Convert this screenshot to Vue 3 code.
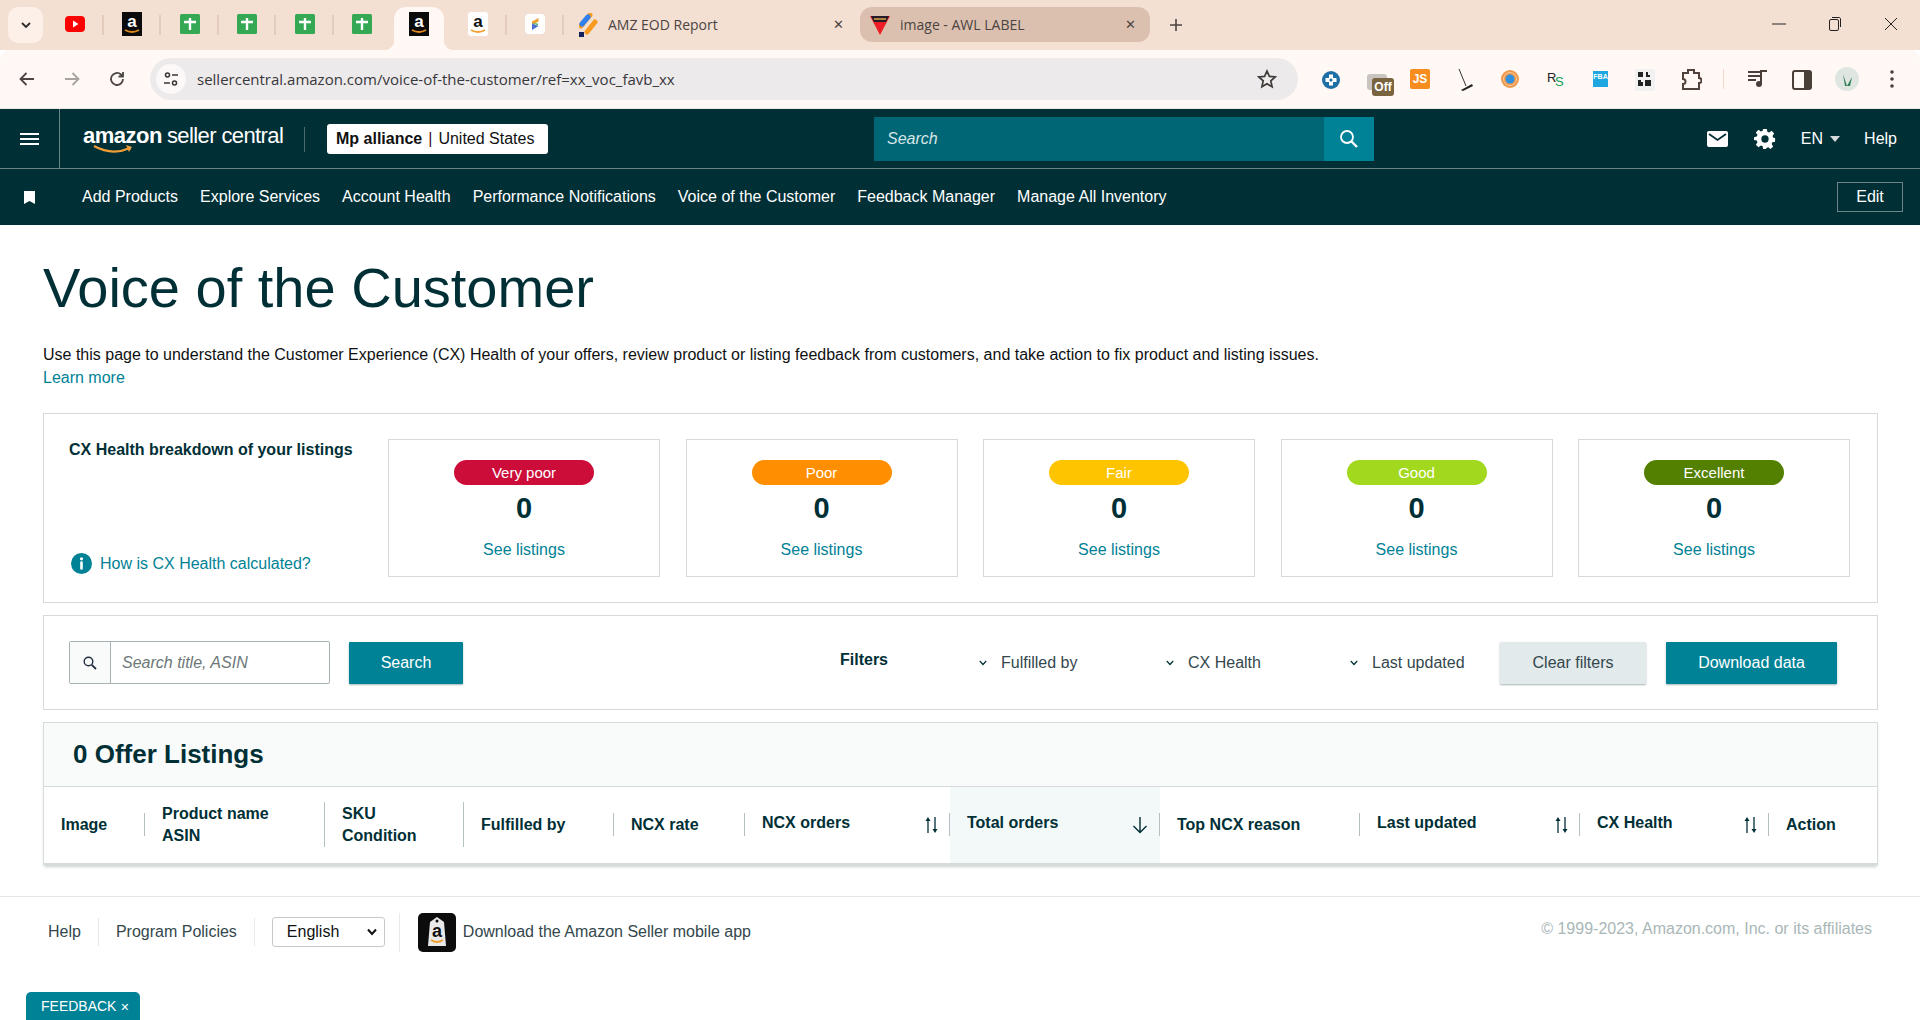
<script setup>
const pinned = [
  { icon: "yt" }, { icon: "amz" }, { icon: "sheet" }, { icon: "sheet" }, { icon: "sheet" }, { icon: "sheet" },
  { icon: "amz", active: true }, { icon: "amzw", wide: true }, { icon: "slogo" },
];
const navLinks = ["Add Products", "Explore Services", "Account Health", "Performance Notifications", "Voice of the Customer", "Feedback Manager", "Manage All Inventory"];
const health = [
  { label: "Very poor", color: "#cc0c39" },
  { label: "Poor", color: "#ff8f00" },
  { label: "Fair", color: "#ffc400" },
  { label: "Good", color: "#a2d81e" },
  { label: "Excellent", color: "#538000" },
];
const filters = [
  { label: "Fulfilled by", w: 187 },
  { label: "CX Health", w: 184 },
  { label: "Last updated", w: 144 },
];
const columns = [
  { w: 101, lines: ["Image"] },
  { w: 180, lines: ["Product name", "ASIN"], tall: true },
  { w: 139, lines: ["SKU", "Condition"], tall: true },
  { w: 150, lines: ["Fulfilled by"] },
  { w: 131, lines: ["NCX rate"] },
  { w: 205, lines: ["NCX orders"], sort: true },
  { w: 210, lines: ["Total orders"], sort: true, sorted: true },
  { w: 200, lines: ["Top NCX reason"] },
  { w: 220, lines: ["Last updated"], sort: true },
  { w: 189, lines: ["CX Health"], sort: true },
  { w: 109, lines: ["Action"], last: true },
];
</script>

<template>
  <div class="page">
    <svg class="defs" width="0" height="0">
      <symbol id="amz" viewBox="0 0 20 24">
        <rect width="20" height="24" fill="#0b0b0b" />
        <text x="10" y="15" font-size="17" font-weight="700" text-anchor="middle" fill="#fff" font-family="Liberation Sans">a</text>
        <path d="M3 18 q7 4 14 0" stroke="#e08a1e" stroke-width="2" fill="none" />
      </symbol>
      <symbol id="amzw" viewBox="0 0 20 24">
        <rect width="20" height="24" rx="3" fill="#fff" />
        <text x="10" y="15" font-size="17" font-weight="700" text-anchor="middle" fill="#111" font-family="Liberation Sans">a</text>
        <path d="M3 18 q7 4 14 0" stroke="#f0a030" stroke-width="2" fill="none" />
      </symbol>
      <symbol id="sheet" viewBox="0 0 20 20">
        <rect width="20" height="20" rx="1.5" fill="#34a853" />
        <path d="M4 8h12M10 4v12" stroke="#fff" stroke-width="2.4" fill="none" />
      </symbol>
      <symbol id="yt" viewBox="0 0 20 20">
        <rect y="2" width="20" height="16" rx="4" fill="#f00" />
        <path d="M8 6.5l5.5 3.5L8 13.5z" fill="#fff" />
      </symbol>
      <symbol id="slogo" viewBox="0 0 20 20">
        <rect width="20" height="20" rx="4" fill="#fff" />
        <path d="M13.5 4L7 7.5v3.5l6.5-3.5z" fill="#f0a030" />
        <path d="M7 9.5l6.5 2.5-6.5 4z" fill="#4a6fd0" />
        <path d="M7 9l6 2.6v-2z" fill="#58b368" />
      </symbol>
    </svg>

    <div class="tabstrip">
      <div class="tab-list">
        <svg width="10" height="7" viewBox="0 0 10 7"><path d="M1 1l4 4 4-4" stroke="#2b2b2b" stroke-width="1.8" fill="none" /></svg>
      </div>
      <div class="pins">
        <div v-for="(p, i) in pinned" :key="i" class="pin" :class="{ active: p.active, wide: p.wide }">
          <svg width="20" height="24" class="pin-icon"><use :href="'#' + p.icon" /></svg>
        </div>
      </div>
      <div class="tab">
        <svg width="20" height="24" viewBox="0 0 20 24">
          <path d="M2 13L11 2M8 19L16 9" stroke="#f79a1f" stroke-width="5" stroke-linecap="round" />
          <path d="M3 11l6-7" stroke="#2f80ed" stroke-width="5" stroke-linecap="round" />
          <rect x="0" y="19" width="5" height="5" fill="#14205a" />
        </svg>
        <span class="tab-title">AMZ EOD Report</span>
        <span class="tab-x">✕</span>
      </div>
      <div class="tab current">
        <svg width="20" height="20" viewBox="0 0 20 20">
          <path d="M0 1h20L10 20z" fill="#ed1c24" />
          <path d="M1 1h18l-3 6H4z" fill="#241a2a" />
          <path d="M4 4h12" stroke="#e6b84c" stroke-width="1.4" />
        </svg>
        <span class="tab-title">image - AWL LABEL</span>
        <span class="tab-x">✕</span>
      </div>
      <svg class="plus" width="14" height="14" viewBox="0 0 14 14"><path d="M7 1v12M1 7h12" stroke="#4b4442" stroke-width="1.6" /></svg>
      <div class="win">
        <svg width="14" height="14" viewBox="0 0 14 14"><path d="M0 7h14" stroke="#222" stroke-width="1" /></svg>
        <svg width="14" height="14" viewBox="0 0 14 14" fill="none" stroke="#222"><rect x="1.5" y="2.5" width="9" height="11" rx="1.5" /><path d="M4 .5h7.5a2 2 0 0 1 1 1.5v8" /></svg>
        <svg width="14" height="14" viewBox="0 0 14 14"><path d="M1 1l12 12M13 1L1 13" stroke="#222" stroke-width="1" /></svg>
      </div>
    </div>

    <div class="toolbar">
      <svg class="tool" width="18" height="18" viewBox="0 0 18 18"><path d="M16 9H3M8.5 3L2.5 9l6 6" stroke="#4b4442" stroke-width="1.8" fill="none" /></svg>
      <svg class="tool" width="18" height="18" viewBox="0 0 18 18"><path d="M2 9h13M9.5 3l6 6-6 6" stroke="#a9a3a0" stroke-width="1.8" fill="none" /></svg>
      <svg class="tool" width="18" height="18" viewBox="0 0 18 18"><path d="M15 9a6 6 0 1 1-2-4.5L15 6.5M15 2v4.5h-4.5" stroke="#4b4442" stroke-width="1.8" fill="none" /></svg>
      <div class="omnibox">
        <span class="site-btn">
          <svg width="16" height="16" viewBox="0 0 16 16" fill="none" stroke="#3a3533" stroke-width="1.5">
            <circle cx="4.5" cy="4" r="2" /><path d="M9 4h6M1 12h6" /><circle cx="11.5" cy="12" r="2" />
          </svg>
        </span>
        <span class="url">sellercentral.amazon.com/voice-of-the-customer/ref=xx_voc_favb_xx</span>
        <svg class="star" width="20" height="20" viewBox="0 0 20 20"><path d="M10 2l2.4 5.4 5.8.6-4.4 3.9 1.3 5.8L10 14.7l-5.1 3 1.3-5.8L1.8 8l5.8-.6z" fill="none" stroke="#3f3a38" stroke-width="1.7" /></svg>
      </div>
      <div class="exts">
        <svg class="e" style="left:0" width="18" height="20" viewBox="0 0 18 20"><circle cx="9" cy="10" r="9" fill="#1d6fa5" /><path d="M9 4.5v11M3.500 10h11" stroke="#fff" stroke-width="4" /><circle cx="9" cy="10" r="1.600" fill="#1d6fa5" /></svg>
        <div class="off-wrap"><span class="off-back"></span><span class="off">Off</span></div>
        <span class="js">JS</span>
        <svg width="22" height="24" class="e2" viewBox="0 0 22 24"><path d="M5 1l7 17" stroke="#333" stroke-width="1" /><path d="M7 22l11-6 1 2-10 5z" fill="#222" /></svg>
        <svg width="20" height="20" class="e3" viewBox="0 0 20 20"><circle cx="10" cy="10" r="9" fill="#ee9a4d" /><circle cx="10" cy="10" r="4.500" fill="#2f8fe0" /><circle cx="10" cy="10" r="6.500" fill="none" stroke="#f6c79c" /></svg>
        <span class="rs"><b>R</b><i>S</i></span>
        <span class="fba">FBA</span>
        <svg width="20" height="22" class="e4" viewBox="0 0 20 22"><rect width="20" height="22" rx="2" fill="#f1f1f1" /><path d="M3 3h5v5H3zM11 3h2v3h2v2h-4zM3 11h3v2h2v4H3zM10 11h6v6h-6z" fill="#222" /></svg>
        <svg width="22" height="24" class="e5" viewBox="0 0 22 24"><path d="M3 5h5V2h6v3h5v5a2.500 2.500 0 0 1 0 5v6H3v-5a2.500 2.500 0 0 0 0-5z" fill="none" stroke="#51433c" stroke-width="2" /></svg>
        <span class="ext-sep"></span>
        <svg width="22" height="20" class="e6" viewBox="0 0 22 20"><path d="M1 3h12M1 7h12M1 11h8" stroke="#4b3f39" stroke-width="2" /><path d="M14 15V2h6" stroke="#4b3f39" stroke-width="2" fill="none" /><circle cx="12" cy="15" r="3" fill="#4b3f39" /></svg>
        <svg width="20" height="20" class="e7" viewBox="0 0 20 20"><rect x="1" y="1" width="18" height="18" rx="2" fill="none" stroke="#4b3f39" stroke-width="2" /><rect x="12" y="1" width="7" height="18" fill="#4b3f39" /></svg>
        <svg width="24" height="24" class="e8" viewBox="0 0 24 24"><circle cx="12" cy="12" r="12" fill="#dfe6e2" /><path d="M8 7l4 12 5-9-2 9h-5z" fill="#2f7d55" /></svg>
        <svg width="6" height="20" class="e9" viewBox="0 0 6 20"><circle cx="3" cy="3" r="1.800" fill="#4b3f39" /><circle cx="3" cy="10" r="1.800" fill="#4b3f39" /><circle cx="3" cy="17" r="1.800" fill="#4b3f39" /></svg>
      </div>
    </div>

    <header class="sc-head">
      <div class="sc-top">
        <div class="sc-left">
          <div class="burger"><i></i><i></i><i></i></div>
          <div class="logo">
            <span class="logo-a">amazon</span><span class="logo-s">seller central</span>
            <svg class="smile" width="42" height="10" viewBox="0 0 42 10"><path d="M1 1q18 10 36 2" stroke="#f19e38" stroke-width="2.200" fill="none" /><path d="M33 0l6 2-3 5" fill="#f19e38" /></svg>
          </div>
          <span class="logo-sep"></span>
          <div class="acct"><b>Mp alliance</b><span class="pipe">|</span>United States</div>
        </div>
        <div class="sc-search">
          <span class="sc-ph">Search</span>
          <span class="sc-go">
            <svg width="20" height="20" viewBox="0 0 20 20" fill="none" stroke="#fff" stroke-width="1.800"><circle cx="8" cy="8" r="6" /><path d="M12.500 12.500L18 18" stroke-width="2.400" /></svg>
          </span>
        </div>
        <div class="sc-right">
          <svg width="21" height="16" viewBox="0 0 21 16"><rect width="21" height="16" rx="2" fill="#fff" /><path d="M2 3l8.500 6L19 3" stroke="#002f36" stroke-width="1.800" fill="none" /></svg>
          <svg class="gear" width="22" height="22" viewBox="0 0 24 24"><path fill="#fff" fill-rule="evenodd" d="M10 1h4l.6 3.100 1.900.8 2.700-1.800 2.800 2.800-1.800 2.700.8 1.900L23 11v4l-3 .6-.8 1.900 1.700 2.600-2.800 2.800-2.700-1.800-1.800.8L13 23h-3l-.6-3-1.900-.8-2.600 1.800L2 18.200l1.800-2.700-.8-1.900L0 13v-3l3-.6.800-1.900L2 4.900 4.900 2l2.600 1.800 1.900-.8zM12 8a4 4 0 1 0 0 8 4 4 0 0 0 0-8z" /></svg>
          <span class="lang">EN<i class="caret"></i></span>
          <span class="help">Help</span>
        </div>
      </div>
      <nav class="sc-nav">
        <svg class="bm" width="11" height="13" viewBox="0 0 11 13"><path d="M0 0h11v13L5.500 10 0 13z" fill="#fff" /></svg>
        <a v-for="l in navLinks" :key="l">{{ l }}</a>
        <button class="edit">Edit</button>
      </nav>
    </header>

    <main class="main">
      <h1>Voice of the Customer</h1>
      <p class="intro">Use this page to understand the Customer Experience (CX) Health of your offers, review product or listing feedback from customers, and take action to fix product and listing issues.</p>
      <a class="learn">Learn more</a>

      <section class="panel cx">
        <div class="cx-side">
          <div class="cx-title">CX Health breakdown of your listings</div>
          <div class="cx-how">
            <svg width="21" height="21" viewBox="0 0 21 21"><circle cx="10.500" cy="10.500" r="10.500" fill="#008296" /><rect x="9.200" y="8.500" width="2.600" height="8" fill="#fff" /><circle cx="10.500" cy="5.800" r="1.600" fill="#fff" /></svg>
            <a>How is CX Health calculated?</a>
          </div>
        </div>
        <div class="cx-cards">
          <div v-for="h in health" :key="h.label" class="card">
            <span class="pill" :style="{ background: h.color }">{{ h.label }}</span>
            <span class="num">0</span>
            <a class="see">See listings</a>
          </div>
        </div>
      </section>

      <section class="panel filters">
        <div class="search-box">
          <span class="prefix">
            <svg width="14" height="14" viewBox="0 0 14 14" fill="none" stroke="#232f3e" stroke-width="1.400"><circle cx="5.500" cy="5.500" r="4.300" /><path d="M8.800 8.800L13 13" stroke-width="1.800" /></svg>
          </span>
          <span class="ph">Search title, ASIN</span>
        </div>
        <button class="btn primary search-btn">Search</button>
        <b class="f-label">Filters</b>
        <div v-for="f in filters" :key="f.label" class="f-item" :style="{ width: f.w + 'px' }">
          <svg width="8" height="6" viewBox="0 0 8 6"><path d="M.8 1l3.200 3.500L7.200 1" stroke="#002f36" stroke-width="1.200" fill="none" /></svg>
          <span>{{ f.label }}</span>
        </div>
        <button class="btn clear">Clear filters</button>
        <button class="btn primary dl">Download data</button>
      </section>

      <section class="panel listings">
        <div class="l-title">0 Offer Listings</div>
        <div class="l-row">
          <div v-for="c in columns" :key="c.lines[0]" class="col" :class="{ sorted: c.sorted, last: c.last, tall: c.tall }" :style="{ width: c.w + 'px' }">
            <div class="col-inner" :class="{ up: c.sort }">
              <span class="col-text"><span v-for="t in c.lines" :key="t">{{ t }}</span></span>
              <svg v-if="c.sorted" class="sort-ic big" width="16" height="18" viewBox="0 0 16 18"><path d="M8 1v15M1.500 10L8 16.500 14.500 10" stroke="#002f36" stroke-width="1.400" fill="none" /></svg>
              <svg v-else-if="c.sort" class="sort-ic" width="14" height="18" viewBox="0 0 14 18"><path d="M4 17V3M11 1v14" stroke="#002f36" stroke-width="1.300" /><path d="M1.500 5L4 1l2.500 4zM8.500 13L11 17l2.500-4z" fill="#002f36" /></svg>
            </div>
          </div>
        </div>
      </section>
    </main>

    <footer class="foot">
      <a class="f-link first">Help</a>
      <a class="f-link">Program Policies</a>
      <div class="lang-sel">
        <span>English</span>
        <svg width="10" height="8" viewBox="0 0 10 8"><path d="M1 1.500l4 4.500 4-4.500" stroke="#111" stroke-width="2" fill="none" /></svg>
      </div>
      <div class="app-ic">
        <svg width="38" height="39" viewBox="0 0 38 39">
          <rect width="38" height="39" rx="5" fill="#0c0c0c" />
          <path d="M12 9l7-5 7 5 2 24H10z" fill="#e9e9e9" />
          <circle cx="19" cy="8" r="1.500" fill="#0c0c0c" />
          <text x="19" y="24" font-size="18" font-weight="700" text-anchor="middle" fill="#111" font-family="Liberation Sans">a</text>
          <path d="M13 27q6 4 12 0" stroke="#f0a030" stroke-width="1.800" fill="none" />
        </svg>
        <span>Download the Amazon Seller mobile app</span>
      </div>
      <span class="copy">© 1999-2023, Amazon.com, Inc. or its affiliates</span>
    </footer>

    <div class="feedback">FEEDBACK <span>✕</span></div>
  </div>
</template>

<style scoped>
.page {
  position: relative;
  width: 1920px;
  height: 1020px;
  overflow: hidden;
  background: #fff;
  font-family: "Liberation Sans", Arial, sans-serif;
  color: #002f36;
  font-size: 16px;
}
.defs {
  position: absolute;
}

/* browser */
.tabstrip {
  height: 50px;
  background: #f4dfd3;
  display: flex;
  align-items: flex-start;
  padding-left: 8px;
}
.tab-list {
  width: 35px;
  height: 36px;
  margin-top: 7px;
  background: #fdf0e9;
  border-radius: 10px;
  display: flex;
  align-items: center;
  justify-content: center;
}
.pins {
  display: flex;
  margin-left: 3px;
}
.pin {
  width: 57.500px;
  height: 43px;
  margin-top: 7px;
  display: flex;
  align-items: center;
  justify-content: center;
  position: relative;
  padding-bottom: 10px;
  box-sizing: border-box;
}
.pin::after {
  content: "";
  position: absolute;
  right: 0;
  top: 8px;
  height: 20px;
  width: 2px;
  background: #e5cbbb;
}
.pin:nth-child(6)::after,
.pin.active::after {
  display: none;
}
.pin.active {
  width: 50px;
  margin-left: 3px;
  margin-right: 5px;
  background: #fff8f4;
  border-radius: 12px 12px 0 0;
}
.pin.active::before {
  content: "";
  position: absolute;
  left: -10px;
  right: -10px;
  bottom: 0;
  height: 10px;
  background:
    radial-gradient(circle at 0 0, #f4dfd3 10px, #fff8f4 10.500px) 0 0 / 10px 10px no-repeat,
    radial-gradient(circle at 100% 0, #f4dfd3 10px, #fff8f4 10.500px) 100% 0 / 10px 10px no-repeat;
}
.pin-icon {
  position: relative;
}
.tab {
  width: 295px;
  height: 35px;
  margin-top: 7px;
  display: flex;
  align-items: center;
  padding-left: 14px;
  box-sizing: border-box;
  font-family: "Open Sans", sans-serif;
  font-size: 14px;
  color: #4b4442;
  flex-shrink: 0;
  margin-left: 1px;
}
.tab-title {
  margin-left: 9px;
  flex: 1;
}
.tab-x {
  font-size: 13px;
  margin-right: 16px;
  font-family: "DejaVu Sans", sans-serif;
}
.tab.current {
  background: #dcc0af;
  border-radius: 12px;
  width: 290px;
  padding-left: 10px;
  margin-left: 0;
}
.tab.current .tab-title {
  margin-left: 10px;
}
.tab.current .tab-x {
  margin-right: 14px;
}
.plus {
  margin: 18px 0 0 19px;
}
.win {
  margin-left: auto;
  display: flex;
  gap: 42px;
  padding: 17px 22px 0 0;
}
.toolbar {
  height: 58px;
  background: #fff8f4;
  border-radius: 10px 10px 0 0;
  border-bottom: 1px solid #f2e9e3;
  box-sizing: content-box;
  display: flex;
  align-items: center;
  padding-left: 18px;
  position: relative;
}
.tool {
  margin-right: 27px;
  flex-shrink: 0;
}
.omnibox {
  position: absolute;
  left: 150px;
  top: 8px;
  width: 1148px;
  height: 42px;
  border-radius: 21px;
  background: #edeaec;
  display: flex;
  align-items: center;
  padding-left: 6px;
  box-sizing: border-box;
}
.site-btn {
  width: 30px;
  height: 30px;
  border-radius: 50%;
  background: #fbf8f7;
  display: flex;
  align-items: center;
  justify-content: center;
}
.url {
  margin-left: 11px;
  font-family: "Open Sans", sans-serif;
  font-size: 15px;
  color: #38383b;
}
.star {
  position: absolute;
  right: 21px;
  top: 11px;
}
.exts {
  position: absolute;
  left: 1322px;
  top: 0;
  right: 0;
  height: 58px;
}
.exts > * {
  position: absolute;
}
.e {
  top: 20px;
}
.off-wrap {
  left: 45px;
  top: 24px;
  width: 28px;
  height: 26px;
}
.off-back {
  position: absolute;
  left: 0;
  top: 0;
  width: 20px;
  height: 16px;
  border-radius: 3px;
  background: #c9c4bf;
}
.off {
  position: absolute;
  left: 5px;
  top: 4px;
  width: 22px;
  height: 18px;
  border-radius: 3px;
  background: #7a6440;
  color: #fff;
  font-size: 12px;
  font-weight: 700;
  text-align: center;
  line-height: 18px;
}
.js {
  left: 88px;
  top: 19px;
  width: 20px;
  height: 20px;
  background: #f78d1e;
  border-radius: 2px;
  color: #fff;
  font-weight: 700;
  font-size: 12px;
  text-align: center;
  line-height: 20px;
}
.e2 {
  left: 132px;
  top: 18px;
}
.e3 {
  left: 178px;
  top: 19px;
}
.rs {
  left: 225px;
  top: 19px;
  font-size: 13px;
  line-height: 18px;
  color: #222;
  width: 20px;
}
.rs b {
  font-weight: 400;
}
.rs i {
  font-style: normal;
  color: #0f9d58;
  position: absolute;
  left: 8px;
  top: 4px;
}
.fba {
  left: 271px;
  top: 21px;
  width: 15px;
  height: 16px;
  background: #1ea7e1;
  color: #fff;
  font-size: 7px;
  font-weight: 700;
  text-align: center;
  line-height: 12px;
}
.e4 {
  left: 313px;
  top: 19px;
}
.e5 {
  left: 358px;
  top: 18px;
}
.ext-sep {
  left: 401px;
  top: 19px;
  width: 1px;
  height: 20px;
  background: #f4d7c8;
}
.e6 {
  left: 425px;
  top: 19px;
}
.e7 {
  left: 470px;
  top: 20px;
}
.e8 {
  left: 513px;
  top: 17px;
}
.e9 {
  left: 567px;
  top: 19px;
}

/* seller central header */
.sc-head {
  background: #002f36;
  color: #fff;
}
.sc-top {
  height: 60px;
  display: grid;
  grid-template-columns: 874px 500px 1fr;
  align-items: center;
  border-bottom: 1px solid #6e8488;
  box-sizing: border-box;
}
.sc-left {
  display: flex;
  align-items: center;
  height: 60px;
}
.burger {
  width: 60px;
  height: 60px;
  box-sizing: border-box;
  border-right: 1px solid #6e8488;
  display: flex;
  flex-direction: column;
  justify-content: center;
  gap: 3px;
  padding: 0 20px;
}
.burger i {
  height: 2px;
  background: #fff;
}
.logo {
  position: relative;
  margin-left: 23px;
  width: 198px;
  white-space: nowrap;
  display: flex;
  align-items: baseline;
  padding-bottom: 6px;
}
.logo-a {
  font-weight: 700;
  font-size: 22px;
  letter-spacing: -0.5px;
}
.logo-s {
  font-size: 22px;
  font-weight: 400;
  margin-left: 5px;
  letter-spacing: -0.6px;
}
.smile {
  position: absolute;
  left: 10px;
  top: 22px;
}
.logo-sep {
  width: 1px;
  height: 25px;
  background: #4d6a6f;
  margin-left: 23px;
}
.acct {
  margin-left: 22px;
  height: 30px;
  width: 221px;
  box-sizing: border-box;
  background: #fff;
  border-radius: 3px;
  color: #111;
  padding-left: 9px;
  font-size: 16px;
  line-height: 29px;
  white-space: nowrap;
}
.pipe {
  color: #3a0a20;
  margin: 0 6px;
}
.sc-search {
  height: 44px;
  background: #006574;
  display: flex;
  justify-content: space-between;
  align-items: center;
}
.sc-ph {
  margin-left: 13px;
  font-style: italic;
  color: #d7e6e8;
  font-size: 16px;
}
.sc-go {
  width: 50px;
  height: 44px;
  background: #008296;
  display: flex;
  align-items: center;
  justify-content: center;
}
.sc-right {
  display: flex;
  align-items: center;
  justify-content: flex-end;
  padding-right: 23px;
}
.gear {
  margin-left: 26px;
}
.lang {
  margin-left: 25px;
  display: flex;
  align-items: center;
  font-size: 16px;
}
.caret {
  margin-left: 7px;
  border: 5.500px solid transparent;
  border-top: 6px solid #d5dbdb;
  border-bottom: 0;
}
.help {
  margin-left: 24px;
}
.sc-nav {
  height: 56px;
  display: flex;
  align-items: center;
  padding-left: 24px;
  gap: 22px;
  font-size: 16px;
}
.bm {
  margin-right: 25px;
}
.edit {
  margin-left: auto;
  margin-right: 17px;
  width: 66px;
  height: 30px;
  background: transparent;
  color: #fff;
  border: 1px solid #6e8488;
  font: inherit;
  padding: 0;
}

/* content */
.main {
  padding: 0 42px 0 43px;
}
h1 {
  margin: 31px 0 0;
  font-weight: 400;
  font-size: 56px;
  line-height: 64px;
  color: #002f36;
}
.intro {
  margin: 23px 0 0;
  font-size: 16px;
  line-height: 23px;
  color: #0f1111;
}
.learn {
  display: block;
  line-height: 23px;
  color: #008296;
}
.panel {
  border: 1px solid #d5dbdb;
  box-sizing: border-box;
}
.cx {
  margin-top: 24px;
  height: 190px;
  display: flex;
  padding: 25px 25px 25px 25px;
}
.cx-side {
  width: 319px;
  display: flex;
  flex-direction: column;
  justify-content: space-between;
  flex-shrink: 0;
}
.cx-title {
  font-weight: 700;
  line-height: 22px;
  white-space: nowrap;
}
.cx-how {
  display: flex;
  align-items: center;
  gap: 8px;
  margin: 0 0 3px 2px;
  color: #008296;
}
.cx-cards {
  display: flex;
  gap: 25.500px;
  flex: 1;
}
.card {
  width: 272px;
  height: 138px;
  box-sizing: border-box;
  border: 1px solid #d5dbdb;
  display: flex;
  flex-direction: column;
  align-items: center;
  padding-top: 20px;
}
.pill {
  width: 140px;
  height: 25px;
  line-height: 25px;
  border-radius: 13px;
  color: #fff;
  text-align: center;
  font-size: 15px;
}
.num {
  font-weight: 700;
  font-size: 29px;
  line-height: 34px;
  margin-top: 6px;
}
.see {
  color: #008296;
  margin-top: 13px;
  line-height: 24px;
}
.filters {
  margin-top: 12px;
  height: 95px;
  display: flex;
  align-items: center;
  padding: 0 25px;
}
.search-box {
  width: 261px;
  height: 43px;
  border: 1px solid #a6b2b3;
  border-radius: 2px;
  display: flex;
  box-sizing: border-box;
}
.prefix {
  width: 40px;
  background: #f9fafa;
  border-right: 1px solid #a6b2b3;
  display: flex;
  align-items: center;
  justify-content: center;
}
.ph {
  margin-left: 11px;
  font-style: italic;
  color: #6c7778;
  line-height: 41px;
}
.btn {
  border: none;
  font: inherit;
  height: 42px;
  border-radius: 1px;
  box-shadow: 0 1px 2px rgba(0, 40, 50, 0.35);
  padding: 0;
}
.primary {
  background: #008296;
  color: #fff;
}
.search-btn {
  width: 114px;
  margin-left: 19px;
}
.f-label {
  margin: -6px 0 0 377px;
  width: 139px;
  flex-shrink: 0;
}
.f-item {
  display: flex;
  align-items: center;
  gap: 14px;
  flex-shrink: 0;
  color: #33474c;
}
.clear {
  width: 146px;
  background: #e3eaeb;
  color: #33474c;
  margin-left: 6px;
}
.dl {
  width: 171px;
  margin-left: 20px;
}
.listings {
  margin-top: 12px;
  height: 143px;
  border-bottom: none;
  box-shadow: 0 3px 3px -1px #cdd3d3;
}
.l-title {
  height: 64px;
  box-sizing: border-box;
  background: #f9fafa;
  border-bottom: 1px solid #d5dbdb;
  padding-left: 29px;
  font-size: 26px;
  font-weight: 700;
  line-height: 62px;
}
.l-row {
  display: flex;
  height: 76px;
  border-bottom: 2px solid #d5dbdb;
  box-sizing: content-box;
}
.col {
  position: relative;
  box-sizing: border-box;
  flex-shrink: 0;
  display: flex;
  align-items: center;
  padding: 0 9px 0 17px;
  font-weight: 700;
}
.col::after {
  content: "";
  position: absolute;
  right: 0;
  top: 26px;
  height: 23px;
  width: 1px;
  background: #b4c0c1;
}
.col.tall::after {
  top: 15px;
  height: 45px;
}
.col.last::after {
  display: none;
}
.col.sorted {
  background: #f3f8f9;
}
.col-inner {
  width: 100%;
  display: flex;
  justify-content: space-between;
  align-items: center;
}
.col-inner.up .col-text {
  margin-top: -5px;
}
.col-text {
  display: flex;
  flex-direction: column;
  line-height: 22px;
}
.sort-ic {
  margin-right: 3px;
}
.sort-ic.big {
  margin-right: 3px;
}
.foot {
  margin-top: 31px;
  border-top: 1px solid #e3e6e6;
  height: 70px;
  display: flex;
  align-items: center;
  padding-left: 48px;
  color: #33474c;
  position: relative;
}
.f-link {
  padding-right: 17px;
  margin-right: 17px;
  line-height: 28px;
  border-right: 1px solid #e8ebeb;
  font-size: 16px;
}
.lang-sel {
  width: 113px;
  height: 30px;
  box-sizing: border-box;
  border: 1px solid #c5cbcb;
  border-radius: 3px;
  display: flex;
  align-items: center;
  justify-content: space-between;
  padding: 0 7px 0 14px;
  color: #0f1111;
}
.app-ic {
  margin-left: 14px;
  padding-left: 18px;
  border-left: 1px solid #e8ebeb;
  display: flex;
  align-items: center;
  gap: 7px;
}
.copy {
  margin-left: auto;
  margin-right: 48px;
  margin-top: -7px;
  color: #aab7b8;
}
.feedback {
  position: absolute;
  left: 26px;
  top: 992px;
  width: 114px;
  height: 28px;
  box-sizing: border-box;
  background: #008296;
  color: #fff;
  border-radius: 5px 5px 0 0;
  font-size: 14px;
  line-height: 28px;
  padding-left: 15px;
  white-space: nowrap;
}
.feedback span {
  font-family: "DejaVu Sans", sans-serif;
  font-size: 11px;
}
</style>
